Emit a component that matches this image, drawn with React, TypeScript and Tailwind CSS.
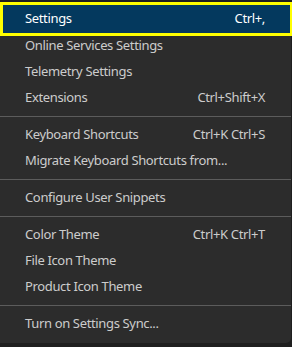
const items: ({ label: string; keys?: string; active?: boolean } | "sep")[] = [
  { label: "Settings", keys: "Ctrl+,", active: true },
  { label: "Online Services Settings" },
  { label: "Telemetry Settings" },
  { label: "Extensions", keys: "Ctrl+Shift+X" },
  "sep",
  { label: "Keyboard Shortcuts", keys: "Ctrl+K Ctrl+S" },
  { label: "Migrate Keyboard Shortcuts from..." },
  "sep",
  { label: "Configure User Snippets" },
  "sep",
  { label: "Color Theme", keys: "Ctrl+K Ctrl+T" },
  { label: "File Icon Theme" },
  { label: "Product Icon Theme" },
  "sep",
  { label: "Turn on Settings Sync..." },
];

export default function App() {
  return (
    <div className="w-[292px] h-[347px] bg-[#1f1f1f] pt-[2px] overflow-hidden font-['Segoe_UI','Noto_Sans',sans-serif] text-[13px] tracking-[-0.35px]">
      <div className="w-[291px] h-[341px] bg-[#2c2c2c] rounded-br-[5px] pt-[3px] pb-[6px] flex flex-col">
        {items.map((it, i) =>
          it === "sep" ? (
            <div key={i} className="h-[11px] flex items-center">
              <div className="h-px w-full bg-[#5c5c5c]" />
            </div>
          ) : it.active ? (
            <div
              key={i}
              className="relative z-10 h-[28px] ml-[3px] mr-[1px] pl-[22px] pr-[25px] flex items-center justify-between bg-[#04395e] text-white outline-[3px] outline-[#ffff00]"
            >
              <span>{it.label}</span>
              {it.keys && <span>{it.keys}</span>}
            </div>
          ) : (
            <div key={i} className="h-[26px] pl-[25px] pr-[26px] flex items-center justify-between text-[#cccccc]">
              <span>{it.label}</span>
              {it.keys && <span>{it.keys}</span>}
            </div>
          )
        )}
      </div>
    </div>
  );
}
